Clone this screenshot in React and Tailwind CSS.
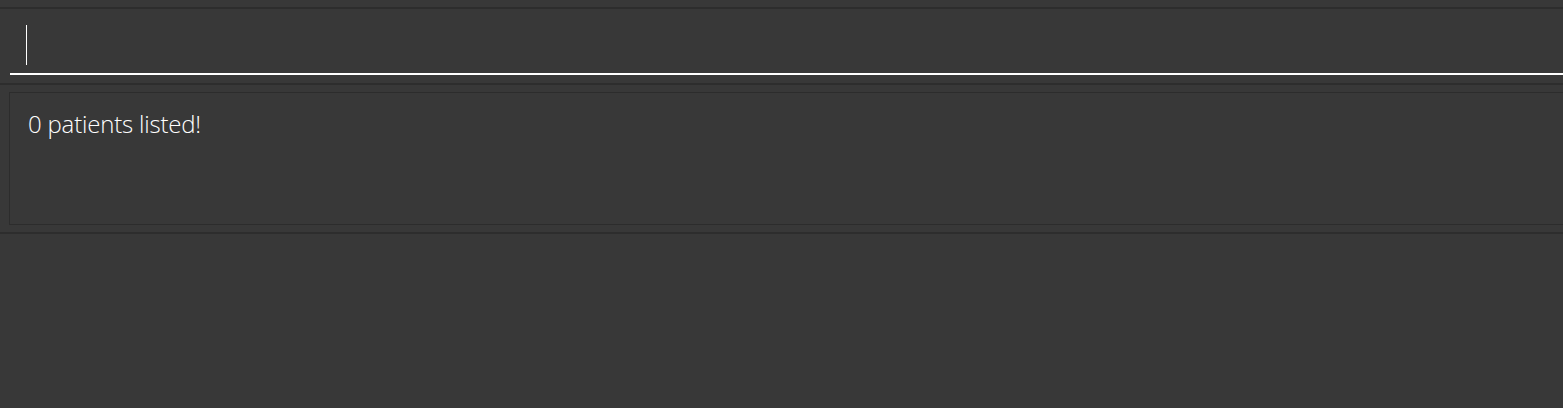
export default function App() {
  return (
    <div className="w-[1563px] h-[408px] bg-[#383838] overflow-hidden" style={{ fontFamily: '"Open Sans", "Noto Sans", sans-serif' }}>
      <div className="h-[7px]" />
      <div className="border-t-2 border-[#2d2d2d]">
        <div className="pl-[10px] pt-[16px]">
          <div className="h-[50px] border-b-2 border-white pl-[16px]">
            <div className="w-[1px] h-[40px] bg-white" />
          </div>
        </div>
      </div>
      <div className="h-[8px]" />
      <div className="border-t-2 border-[#2d2d2d] pt-[7px] pl-[9px]">
        <div className="w-[1580px] h-[133px] border border-[#2c2c2c] pl-[18px] pt-[15px]">
          <div className="text-white text-[24px] font-light leading-[32px] tracking-[-0.2px]">0 patients listed!</div>
        </div>
      </div>
      <div className="h-[7px]" />
      <div className="border-t-2 border-[#2d2d2d]" />
    </div>
  );
}
